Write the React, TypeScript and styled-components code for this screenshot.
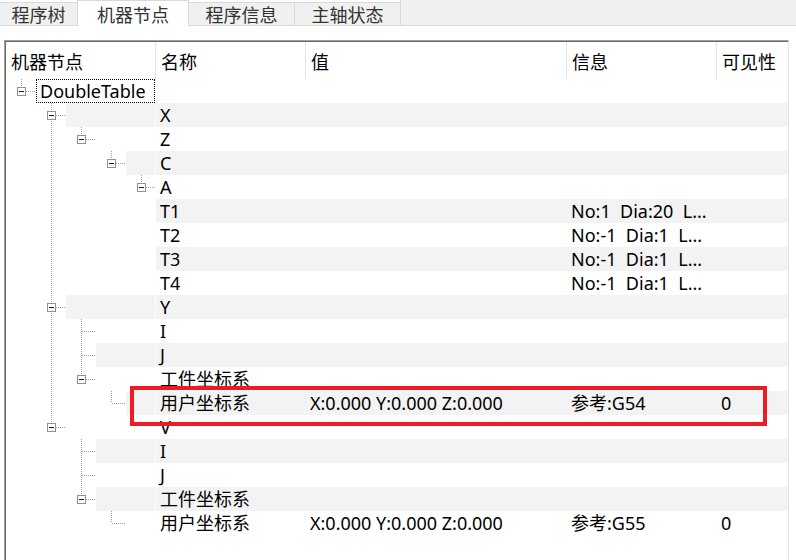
import React from 'react'
import styled, { createGlobalStyle } from 'styled-components'

const GlobalStyle = createGlobalStyle`
  html, body {
    margin: 0;
    padding: 0;
    background: #fff;
  }
  body {
    font-family: 'Noto Sans', 'Noto Sans CJK SC', sans-serif;
    color: #000;
  }
`

const Window = styled.div`
  position: relative;
  width: 796px;
  height: 560px;
  overflow: hidden;
  background: #fff;
  display: flex;
  flex-direction: column;
`

const TabStrip = styled.div`
  display: flex;
  align-items: flex-start;
  height: 26px;
  flex: none;
`

const Tab = styled.div<{ $active?: boolean; $w: number }>`
  box-sizing: border-box;
  width: ${({ $w }) => $w}px;
  height: ${({ $active }) => ($active ? 26 : 24)}px;
  margin-top: ${({ $active }) => ($active ? 0 : 2)}px;
  margin-left: -1px;
  display: flex;
  align-items: center;
  justify-content: center;
  font-family: 'Noto Sans CJK SC', sans-serif;
  font-size: 18px;
  color: #333;
  background: ${({ $active }) => ($active ? '#fff' : '#f0f0f0')};
  border: 1px solid #d9d9d9;
  border-bottom: ${({ $active }) => ($active ? 'none' : '1px solid #d9d9d9')};
  position: relative;
  z-index: ${({ $active }) => ($active ? 1 : 0)};

  &:first-child {
    margin-left: 0;
    border-left: none;
  }
`

const TabFiller = styled.div`
  flex: 1;
  height: 26px;
  box-sizing: border-box;
  margin-left: -1px;
  background: #f0f0f0;
  border-left: 1px solid #d9d9d9;
  border-bottom: 1px solid #d9d9d9;
`

const Body = styled.div`
  flex: 1;
  padding: 14px 0 0 4px;
`

const Frame = styled.div`
  width: 785px;
  height: 540px;
  box-sizing: border-box;
  padding: 1px 0 0 1px;
  border: 1px solid;
  border-color: #a0a0a0 #e3e3e3 #e3e3e3 #a0a0a0;
  box-shadow: inset 1px 1px 0 #696969;
`

const COLUMNS = '150px 150px 261px 150px 1fr'

const HeaderRow = styled.div`
  display: grid;
  grid-template-columns: ${COLUMNS};
  height: 37px;
`

const HeaderCell = styled.div`
  box-sizing: border-box;
  padding: 8px 5px 0;
  font-size: 18px;
  line-height: 24px;
  white-space: nowrap;
  border-right: 1px solid #e5e5e5;

  &:last-child {
    border-right: none;
  }
`

const Row = styled.div`
  display: grid;
  grid-template-columns: ${COLUMNS};
  height: 24px;
`

const Cell = styled.div<{ $striped: boolean }>`
  box-sizing: border-box;
  padding: 0 4px;
  font-size: 18px;
  line-height: 24px;
  white-space: pre;
  overflow: hidden;
  background: ${({ $striped }) => ($striped ? '#f3f3f3' : 'transparent')};
`

const TreeCell = styled.div`
  display: flex;
  overflow: hidden;
  min-width: 0;
`

const Gutter = styled.div<{ $w: number }>`
  flex: none;
  width: ${({ $w }) => $w}px;
  height: 24px;

  svg {
    display: block;
  }
`

const Label = styled.div<{ $striped: boolean; $focused?: boolean }>`
  flex: 1;
  min-width: 0;
  box-sizing: border-box;
  padding-left: 3px;
  font-size: 18px;
  line-height: 22px;
  white-space: nowrap;
  overflow: hidden;
  background: ${({ $striped }) => ($striped ? '#f3f3f3' : 'transparent')};
  border: 1px dotted ${({ $focused }) => ($focused ? '#000' : 'transparent')};
  margin-right: 1px;
`

const Highlight = styled.div`
  position: absolute;
  left: 130px;
  top: 386px;
  width: 637px;
  height: 40px;
  box-sizing: border-box;
  border: 4px solid #ed1c24;
  pointer-events: none;
`

type TreeNode = {
  label?: string
  name?: string
  value?: string
  info?: string
  vis?: string
  children?: TreeNode[]
}

const coordSystem = (ref: string): TreeNode => ({
  name: '工件坐标系',
  children: [{ name: '用户坐标系', value: 'X:0.000 Y:0.000 Z:0.000', info: `参考:${ref}`, vis: '0' }],
})

const tree: TreeNode = {
  label: 'DoubleTable',
  children: [
    {
      name: 'X',
      children: [
        {
          name: 'Z',
          children: [
            {
              name: 'C',
              children: [
                {
                  name: 'A',
                  children: [
                    { name: 'T1', info: 'No:1  Dia:20  L...' },
                    { name: 'T2', info: 'No:-1  Dia:1  L...' },
                    { name: 'T3', info: 'No:-1  Dia:1  L...' },
                    { name: 'T4', info: 'No:-1  Dia:1  L...' },
                  ],
                },
              ],
            },
          ],
        },
      ],
    },
    { name: 'Y', children: [{ name: 'I' }, { name: 'J' }, coordSystem('G54')] },
    { name: 'V', children: [{ name: 'I' }, { name: 'J' }, coordSystem('G55')] },
  ],
}

type FlatRow = {
  node: TreeNode
  level: number
  hasNext: boolean
  trail: boolean[]
}

const flatten = (node: TreeNode, level: number, hasNext: boolean, trail: boolean[], out: FlatRow[]) => {
  out.push({ node, level, hasNext, trail })
  const kids = node.children || []
  kids.forEach((kid, i) => {
    flatten(kid, level + 1, i < kids.length - 1, level === 0 ? [] : [...trail, hasNext], out)
  })
  return out
}

const rows = flatten(tree, 0, false, [], [])

const INDENT = 30
const LINE = '#a0a0a0'

const TreeLines: React.FC<{ row: FlatRow; width: number }> = ({ row, width }) => {
  const { level, hasNext, trail, node } = row
  const cx = 15 + INDENT * level + 0.5
  const hasKids = !!node.children?.length
  return (
    <svg width={width} height={24} shapeRendering="crispEdges">
      {trail.map((on, i) =>
        on ? (
          <line
            key={i}
            x1={15 + INDENT * (i + 1) + 0.5}
            x2={15 + INDENT * (i + 1) + 0.5}
            y1={0}
            y2={24}
            stroke={LINE}
            strokeDasharray="1 1"
          />
        ) : null,
      )}
      <line x1={cx} x2={cx} y1={0} y2={hasNext ? 24 : 12} stroke={LINE} strokeDasharray="1 1" />
      <line x1={cx} x2={30 + INDENT * level} y1={12.5} y2={12.5} stroke={LINE} strokeDasharray="1 1" />
      {hasKids && (
        <g>
          <rect x={cx - 4} y={8.5} width={8} height={8} fill="#fff" stroke="#919191" />
          <line x1={cx - 2.5} x2={cx + 2.5} y1={12.5} y2={12.5} stroke="#1a1a1a" />
        </g>
      )}
    </svg>
  )
}

const headers = ['机器节点', '名称', '值', '信息', '可见性']

const tabs = [
  { title: '程序树', w: 78 },
  { title: '机器节点', w: 112, active: true },
  { title: '程序信息', w: 107 },
  { title: '主轴状态', w: 107 },
]

const App: React.FC = () => {
  return (
    <>
      <GlobalStyle />
      <Window>
        <TabStrip>
          {tabs.map((t) => (
            <Tab key={t.title} $w={t.w} $active={t.active}>
              {t.title}
            </Tab>
          ))}
          <TabFiller />
        </TabStrip>
        <Body>
          <Frame>
            <HeaderRow>
              {headers.map((h) => (
                <HeaderCell key={h}>{h}</HeaderCell>
              ))}
            </HeaderRow>
            {rows.map((row, i) => {
              const striped = i % 2 === 1
              const gutter = 30 + INDENT * row.level
              return (
                <Row key={i}>
                  <TreeCell>
                    <Gutter $w={gutter}>
                      <TreeLines row={row} width={gutter} />
                    </Gutter>
                    <Label $striped={striped} $focused={row.level === 0}>
                      {row.node.label}
                    </Label>
                  </TreeCell>
                  <Cell $striped={striped}>{row.node.name}</Cell>
                  <Cell $striped={striped}>{row.node.value}</Cell>
                  <Cell $striped={striped}>{row.node.info}</Cell>
                  <Cell $striped={striped}>{row.node.vis}</Cell>
                </Row>
              )
            })}
          </Frame>
        </Body>
        <Highlight />
      </Window>
    </>
  )
}

export default App
